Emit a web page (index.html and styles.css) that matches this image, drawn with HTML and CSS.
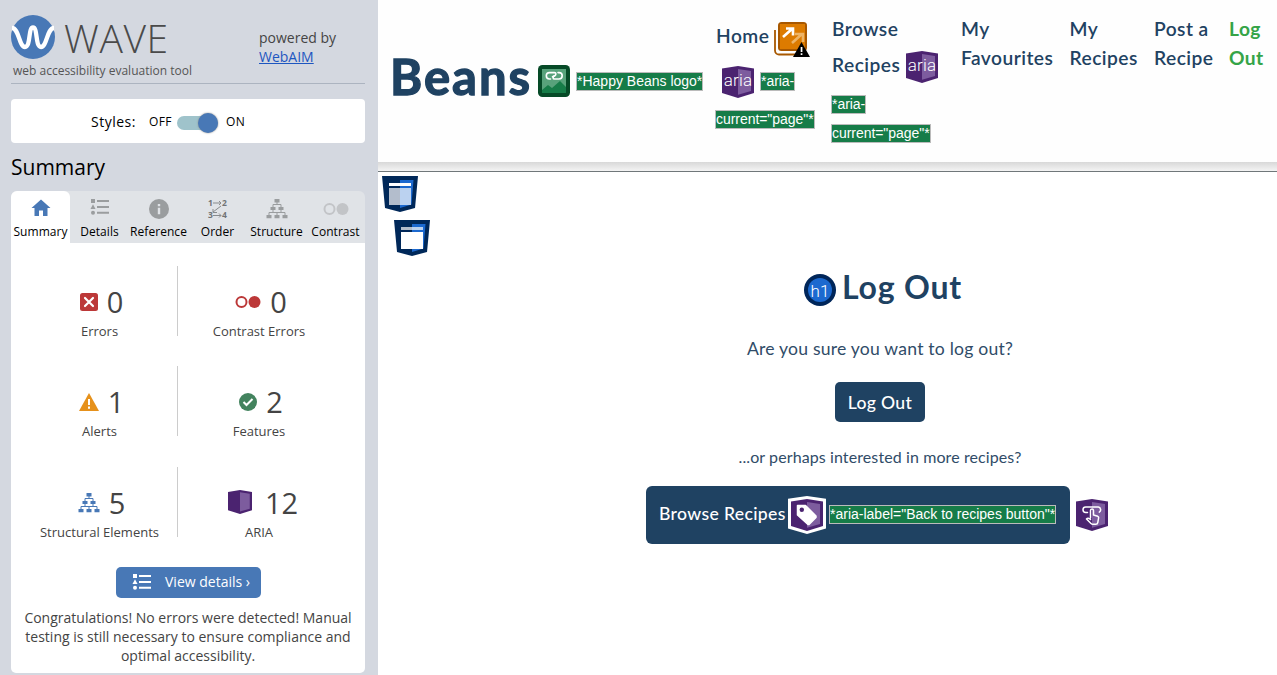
FILE: index.html
```html
<!DOCTYPE html>
<html lang="en">
<head>
<meta charset="utf-8">
<title>WAVE Report - Log Out</title>
<link rel="stylesheet" href="styles.css">
</head>
<body>
<svg class="defs" width="0" height="0" aria-hidden="true">
  <symbol id="list" viewBox="0 0 20 18">
    <rect x="1" y="1" width="4" height="4"/><path d="M3 6.200 5.500 11h-5z"/><circle cx="3" cy="14.700" r="2"/>
    <path d="M7 2h12v2H7zM7 8h12v2H7zM7 13.700h12v2H7z"/>
  </symbol>
  <symbol id="tree" viewBox="0 0 22 20">
    <path d="M8.500 0h5v3.500h-5zM4.500 8h5v3h-5zM12.500 8h5v3h-5zM0.500 16h5v3.300h-5zM8.500 16h5v3.300h-5zM16.500 16h5v3.300h-5z"/>
    <path d="M11 3v2.500M7 8V5.500h8V8M7 11v2.500M15 11v2.500M3 16v-2.500h16V16M11 13.500V16" fill="none" stroke="currentColor"/>
  </symbol>
  <symbol id="aria-box" viewBox="0 0 32 32">
    <path d="M0 2.500 16 0l16 2.500v24.500L16 32 0 27z" fill="#4b2370"/>
    <path d="M16 3l13 2v20l-13 3.800z" fill="#7d5c9e"/>
  </symbol>
</svg>
<div class="app">
  <aside class="sidebar">
    <header class="brand">
      <div class="brand-main">
        <div class="wordmark">
          <svg width="44" height="44" viewBox="0 0 44 44"><circle cx="22" cy="22" r="22" fill="#4878b6"/><path d="M1 13C8 13 8 32 14 32S17 12.500 22 12.500 24 32 30 32 36 13 43 13" fill="none" stroke="#fff" stroke-width="4.300"/></svg>
          <span class="wave">WAVE</span>
        </div>
        <p class="tagline">web accessibility evaluation tool</p>
      </div>
      <p class="powered">powered by<br><a href="#">WebAIM</a></p>
    </header>
    <section class="styles-panel">
      <span class="styles-label">Styles:</span><span class="off">OFF</span>
      <span class="switch"><span class="knob"></span></span><span class="on">ON</span>
    </section>
    <h2 class="side-title">Summary</h2>
    <nav class="tabs">
      <div class="tab active"><svg width="20" height="20" viewBox="0 0 20 20"><path d="M10 1.500 0.500 10h3v8H8v-5.500h4V18h4.500v-8h3z" fill="#4878b6"/></svg><span>Summary</span></div>
      <div class="tab"><svg class="gray list-icon" width="20" height="20" viewBox="0 0 20 20"><use href="#list" width="20" height="18"/></svg><span>Details</span></div>
      <div class="tab"><svg width="20" height="20" viewBox="0 0 20 20"><circle cx="10" cy="10" r="10" fill="#9a9d9f"/><path d="M8.800 5h2.400v2.300H8.800zM8.800 8.700h2.400v6.500H8.800z" fill="#e0e3e7"/></svg><span>Reference</span></div>
      <div class="tab"><svg width="22" height="20" viewBox="0 0 22 20" class="order"><text x="1" y="7">1</text><text x="15" y="7">2</text><text x="1" y="19">3</text><text x="15" y="19">4</text><path d="M6 4h8M12 2l2 2-2 2M14 7l-8 6M6 10v3.500h4M6 16.500h8M12 14.500l2 2-2 2"/></svg><span>Order</span></div>
      <div class="tab"><svg class="gray" width="22" height="20"><use href="#tree" width="22" height="20"/></svg><span>Structure</span></div>
      <div class="tab"><svg width="26" height="20" viewBox="0 0 26 20"><circle cx="6.500" cy="10" r="5" fill="none" stroke="#c2c4c7" stroke-width="2"/><circle cx="19.500" cy="10" r="6" fill="#c2c4c7"/></svg><span>Contrast</span></div>
    </nav>
    <section class="summary">
      <div class="stats">
        <div class="stat"><p class="figure"><svg width="18" height="18" viewBox="0 0 18 18"><rect width="18" height="18" rx="2.500" fill="#bc3838"/><path d="M5 5l8 8M13 5l-8 8" stroke="#fff" stroke-width="2.200" stroke-linecap="round"/></svg><span>0</span></p><p class="caption">Errors</p></div>
        <div class="stat"><p class="figure"><svg width="26" height="14" viewBox="0 0 26 14"><circle cx="6.500" cy="7" r="5" fill="#fff" stroke="#bc3838" stroke-width="2"/><circle cx="19.500" cy="7" r="6" fill="#bc3838"/></svg><span>0</span></p><p class="caption">Contrast Errors</p></div>
        <div class="stat"><p class="figure"><svg width="20" height="20" viewBox="0 0 20 20"><path d="M10 1l10 18H0z" fill="#e6911b"/><path d="M9 7h2v6H9zM9 14.500h2v2.200H9z" fill="#fff"/></svg><span>1</span></p><p class="caption">Alerts</p></div>
        <div class="stat"><p class="figure"><svg width="18" height="18" viewBox="0 0 18 18"><circle cx="9" cy="9" r="9" fill="#43835e"/><path d="M4.500 9l3 3 6-6" fill="none" stroke="#fff" stroke-width="2"/></svg><span>2</span></p><p class="caption">Features</p></div>
        <div class="stat"><p class="figure"><svg class="blue" width="22" height="20"><use href="#tree" width="22" height="20"/></svg><span>5</span></p><p class="caption">Structural Elements</p></div>
        <div class="stat"><p class="figure aria-figure"><svg class="aria-stat" width="24" height="24"><use href="#aria-box" width="24" height="24"/></svg><span>12</span></p><p class="caption">ARIA</p></div>
      </div>
      <a class="details-btn" href="#"><svg width="20" height="18" fill="#fff"><use href="#list" width="20" height="18"/></svg><span>View details ›</span></a>
      <p class="congrats">Congratulations! No errors were detected! Manual<br>testing is still necessary to ensure compliance and<br>optimal accessibility.</p>
    </section>
  </aside>

  <div class="page">
    <header class="site-header">
      <div class="logo">
        <span class="logo-text">Beans</span>
        <svg width="32" height="32" viewBox="0 0 32 32"><rect width="32" height="32" rx="4.500" fill="#064a27"/><path d="M4 4h24v24H4z" fill="#167c48"/><path d="M4 4h24v18l-6-6-8 7-4-3-6 5z" fill="#58a27b"/><g fill="none" stroke="#fff" stroke-width="1.600" stroke-linecap="round"><path d="M12.500 14h-1a3.200 3.200 0 0 1 0-6.400h5c1.800 0 1.800 2 .3 3.200l-2.300 1"/><path d="M20 7.600h1a3.200 3.200 0 0 1 0 6.400h-4.500c-1.800 0-1.800-2-.3-3.200"/></g></svg>
        <span class="tag">*Happy Beans logo*</span>
      </div>
      <nav class="nav">
        <div class="item home">
          <div class="line l-home"><span>Home</span><svg width="36" height="36" viewBox="0 0 36 36"><path d="M1 8v20.500a4 4 0 0 0 4 4h22" fill="none" stroke="#a85800" stroke-width="1.800"/><rect x="4" y="0" width="29" height="29" rx="3.500" fill="#a85800"/><rect x="6" y="2" width="25" height="25" fill="#dd7b00"/><path d="M18 21l10-9M21 12h8v8" fill="none" stroke="#edb467" stroke-width="2.600"/><path d="M9 15l9-8M12 6.500h7v7" fill="none" stroke="#fff" stroke-width="2.600"/><path d="M27.500 20 36 35H19z" fill="#000"/><path d="M26.700 25h1.700v5h-1.700zM26.700 31.300h1.700V33h-1.700z" fill="#fff"/></svg></div>
          <div class="line l-aria"><svg width="32" height="32" viewBox="0 0 32 32"><use href="#aria-box" width="32" height="32"/><text class="aria-text" x="16" y="19.500">aria</text></svg><span class="tag">*aria-</span></div>
          <span class="tag">current="page"*</span>
        </div>
        <div class="item browse">
          <div>Browse</div>
          <div class="line l-recipes"><span>Recipes</span><svg width="32" height="32" viewBox="0 0 32 32"><use href="#aria-box" width="32" height="32"/><text class="aria-text" x="16" y="19.500">aria</text></svg></div>
          <div class="tag-lines"><span class="tag">*aria-</span><span class="tag">current="page"*</span></div>
        </div>
        <div class="item">My<br>Favourites</div>
        <div class="item">My<br>Recipes</div>
        <div class="item">Post a<br>Recipe</div>
        <div class="item logout">Log<br>Out</div>
      </nav>
    </header>
    <div class="shadow"></div>
    <main class="main">
      <div class="landmarks">
        <svg width="36" height="36" viewBox="0 0 36 36"><path d="M0 0h36l-3 32-15 4-15-4z" fill="#002859"/><path d="M18 4h13.500l-2 24.500L18 32z" fill="#1c69cf"/><path d="M7 7h22v3H7z" fill="#fff"/><path d="M7 12h11v17H7z" fill="#b3bdcc"/><path d="M18 12h11v17H18z" fill="#bbd2f0"/></svg>
        <svg class="inner" width="36" height="36" viewBox="0 0 36 36"><path d="M0 0h36l-3 32-15 4-15-4z" fill="#002859"/><path d="M18 4h13.500l-2 24.500L18 32z" fill="#1c69cf"/><path d="M7 7h11v3H7z" fill="#b3bdcc"/><path d="M18 7h11v3H18z" fill="#bbd2f0"/><path d="M7 12h22v17H7z" fill="#fff"/></svg>
      </div>
      <div class="content">
        <h1 class="heading"><svg width="32" height="32" viewBox="0 0 32 32"><circle cx="16" cy="16" r="16" fill="#00265a"/><circle cx="16" cy="16" r="12" fill="#1c69cf"/><text class="h1-text" x="16" y="22.500">h1</text></svg><span>Log Out</span></h1>
        <p class="question">Are you sure you want to log out?</p>
        <button class="logout-btn">Log Out</button>
        <p class="perhaps">...or perhaps interested in more recipes?</p>
        <div class="recipes-row">
          <a class="recipes-btn" href="#"><span class="recipes-label">Browse Recipes</span><svg width="38" height="38" viewBox="0 0 38 38"><path d="M0 2.800 19 0l19 2.800v29.700L19 38 0 32.500z" fill="#fff"/><use href="#aria-box" x="3" y="3" width="32" height="32"/><path d="M9.500 9.500h8L28 20v1.500L21 28.500h-1L9.500 19z" fill="#fff" stroke="#fff" stroke-width="1.500" stroke-linejoin="round"/><circle cx="13.800" cy="13.800" r="2.200" fill="#4b2370"/></svg><span class="tag">*aria-label="Back to recipes button"*</span></a>
          <svg width="32" height="32" viewBox="0 0 32 32"><use href="#aria-box" width="32" height="32"/><path d="M11.500 13.500h-1.800a2.700 2.700 0 0 1 0-5.400h12.600a2.700 2.700 0 0 1 1 5M14.500 19v-7.500a1.500 1.500 0 0 1 3 0V16l4.300 1.300q1 .5.800 1.700l-.8 4.500q-.3 1.800-2 1.800h-3q-1 0-1.800-.8L10.500 20q1.500-1.800 4 .5" fill="none" stroke="#fff" stroke-width="1.500" stroke-linejoin="round" stroke-linecap="round"/></svg>
        </div>
      </div>
    </main>
  </div>
</div>
</body>
</html>
```
FILE: styles.css
```css
* { box-sizing: border-box; }
body, p, h1, h2 { margin: 0; }
body { width: 1277px; height: 675px; overflow: hidden; background: #fff; font-family: "Open Sans", sans-serif; color: #444; }
svg { display: block; flex: none; }
.defs { position: absolute; }
.app { display: flex; height: 675px; }

.sidebar { width: 378px; flex: none; padding: 0 13px 0 11px; background: #d4d8e0; }
.brand { display: flex; height: 84px; padding-top: 15px; border-bottom: 1px solid #acb4c0; }
.brand-main { width: 248px; }
.wordmark { display: flex; height: 44px; gap: 9px; align-items: center; }
.wave { font-size: 39px; font-weight: 300; line-height: 40px; padding-top: 2px; letter-spacing: .6px; color: #4a4a4a; }
.tagline { padding-left: 2px; margin-top: 3px; font-size: 12px; line-height: 18px; color: #555; white-space: nowrap; }
.powered { padding-top: 13px; font-size: 14px; line-height: 19px; }
.powered a { color: #1d56c0; }
.styles-panel { display: flex; align-items: center; height: 44px; margin-top: 15px; padding-left: 80px; border-radius: 4px; background: #fff; color: #000; font-size: 12px; }
.styles-label { width: 58px; font-size: 14px; letter-spacing: .5px; }
.off { width: 28px; letter-spacing: .3px; }
.switch { display: flex; justify-content: flex-end; align-items: center; width: 41px; height: 14px; margin-top: 4px; border-radius: 7px; background: #9fc3cb; }
.knob { width: 20px; height: 20px; border-radius: 50%; background: #4878b6; box-shadow: 0 0 2px #888; }
.on { margin-left: 8px; letter-spacing: .3px; }
.side-title { height: 48px; padding-top: 9px; font-size: 21px; line-height: 30px; font-weight: 400; color: #000; }
.tabs { display: grid; grid-template-columns: repeat(6, 59px); height: 52px; border-radius: 6px 6px 0 0; background: #e0e3e7; }
.tab { display: flex; flex-direction: column; align-items: center; padding-top: 8px; font-size: 12px; line-height: 16px; color: #000; white-space: nowrap; }
.tab.active { border-radius: 6px 6px 0 0; background: #fff; }
.tab span { margin-top: 5px; letter-spacing: .05px; }
.list-icon, .tab.active svg { margin-top: -1px; margin-bottom: 1px; }
.gray { fill: #9a9d9f; color: #9a9d9f; }
.blue { fill: #4878b6; color: #4878b6; }
.order { overflow: visible; }
.order text { font: bold 8.500px "Open Sans", sans-serif; fill: #707375; }
.order path { fill: none; stroke: #888b8d; }
.summary { height: 430px; padding-top: 23px; border-radius: 0 0 5px 5px; background: #fff; }
.stats { display: grid; grid-template-columns: 167px 187px; grid-template-rows: 100px 101px 70px; }
.stat { height: 70px; padding-top: 16px; }
.stat:nth-child(odd) { border-right: 1px solid #ccc; padding-left: 11px; }
.stat:nth-child(even) { padding-right: 25px; }
.figure { display: flex; justify-content: center; align-items: center; height: 40px; gap: 9px; padding-left: 4px; font-size: 29px; line-height: 40px; }
.aria-figure { padding-left: 8px; }
.aria-stat { margin: -2px 4px 0 0; }
.caption { text-align: center; font-size: 13px; line-height: 18px; white-space: nowrap; }
.details-btn { display: flex; align-items: center; width: 145px; height: 31px; margin: 30px auto 10px 105px; padding: 0 0 2px 16px; gap: 13px; border-radius: 5px; background: #4878b6; color: #fff; text-decoration: none; font-size: 14px; white-space: nowrap; }
.congrats { text-align: center; font-size: 14px; line-height: 19px; white-space: nowrap; }

.page { width: 899px; color: #1f4262; font-family: Lato, sans-serif; }
.site-header { display: flex; height: 162px; background: #fefefe; }
.logo { display: flex; align-items: center; width: 338px; padding-left: 12px; }
.logo-text { width: 148px; font-size: 49px; font-weight: 700; line-height: 60px; letter-spacing: 2px; margin-top: -10px; -webkit-text-stroke: 1.3px #1f4262; stroke-linejoin: round; }
.tag { display: block; width: max-content; height: 19px; border: 1px solid #bbb; background: #167c48; color: #fff; font: 14px/16px "Liberation Sans", Arial, sans-serif; white-space: nowrap; letter-spacing: 0; }
.logo svg + .tag { margin-left: 6px; }
.nav { display: grid; grid-template-columns: 116px 129px 108.500px 84.500px 75px 48px; padding-top: 14px; font-size: 19.200px; line-height: 29px; font-weight: 600; white-space: nowrap; letter-spacing: .45px; }
.home .tag, .tag-lines .tag { letter-spacing: -.05px; }
.home > .tag, .tag-lines { margin-left: -1px; }
.line { display: flex; align-items: center; }
.l-home { height: 44px; gap: 5px; padding-top: 4px; }
.l-home span { margin-top: -5px; }
.l-home svg { margin-top: 3px; }
.l-aria { height: 46px; margin-bottom: 6px; padding: 0 0 0 6px; gap: 6px; }
.l-aria svg { margin-top: 2px; }
.l-recipes { height: 42px; gap: 6px; }
.l-recipes svg { margin-top: 5px; }
.tag-lines { display: grid; gap: 10px; margin-top: 10px; }
.logout { color: #35a447; font-weight: 700; }
.aria-text { font: 300 17px Roboto, sans-serif; letter-spacing: .2px; text-anchor: middle; fill: #fff; }
.shadow { height: 10px; border-bottom: 1px solid #70777a; background: linear-gradient(#d8d8d8, #f4f4f4); }
.main { display: flex; height: 503px; }
.landmarks { width: 105px; padding: 4px; }
.landmarks .inner { margin: 8px 0 0 12px; }
.content { display: flex; flex-direction: column; align-items: center; width: 794px; }
.heading { display: flex; align-items: center; height: 42px; margin: 95px 0 0 6px; gap: 6px; font-size: 32px; line-height: 40px; letter-spacing: .8px; }
.heading span { margin-top: -2px; }
.heading svg { margin-top: 4px; }
.h1-text { font: 300 17px Roboto, sans-serif; text-anchor: middle; fill: #fff; letter-spacing: 0; }
.question { margin-top: 27px; color: #304c68; font-size: 17.600px; line-height: 26px; letter-spacing: .2px; white-space: nowrap; }
.logout-btn { width: 90px; height: 40px; margin-top: 20px; padding: 0; border: 0; border-radius: 5px; background: #1f4262; color: #fff; font: 500 17.600px Lato, sans-serif; letter-spacing: .3px; }
.perhaps { margin-top: 23px; color: #304c68; font-size: 16px; line-height: 24px; letter-spacing: .1px; white-space: nowrap; }
.recipes-row { display: flex; align-items: center; gap: 6px; margin: 17px 6px 0 0; }
.recipes-btn { display: flex; align-items: center; width: 424px; height: 58px; padding-left: 13px; border-radius: 6px; background: #1f4262; color: #fff; text-decoration: none; }
.recipes-label { width: 129px; padding-bottom: 4px; font-size: 17.600px; font-weight: 500; letter-spacing: .35px; white-space: nowrap; }
.recipes-btn .tag { margin: -2px 0 0 3px; }
```
